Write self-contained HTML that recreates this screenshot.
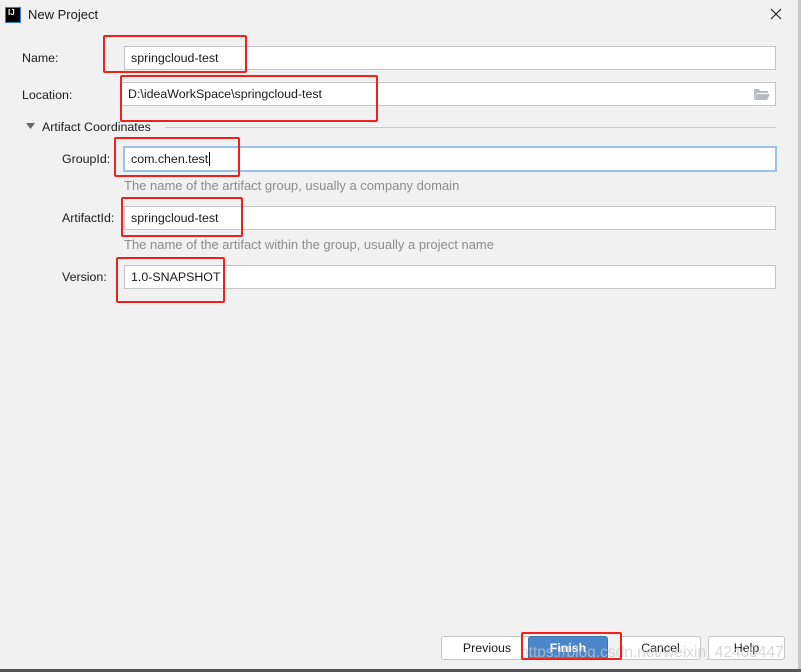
<!DOCTYPE html><html><head><style>
body{margin:0;width:801px;height:672px;background:#f1f1f1;font-family:"Liberation Sans",sans-serif;font-size:12.4px;color:#1a1a1a;position:relative;overflow:hidden}
.a{position:absolute}
.in{position:absolute;background:#fff;border:1px solid #c4c4c4;box-sizing:border-box;height:24px;line-height:22px;padding-left:6px}
.lbl{position:absolute;line-height:16px}
.hint{position:absolute;color:#8c8c8c;font-size:13px}
.red{position:absolute;border:2px solid #f0201a;border-radius:2px;box-sizing:border-box}
.btn{position:absolute;top:636px;height:24px;border:1px solid #c4c4c4;border-radius:3px;background:#fff;box-sizing:border-box;text-align:center;line-height:22px}
</style></head><body>
<div class="a" style="left:798px;top:0;width:3px;height:672px;background:#c8c8c8"></div>
<div class="a" style="left:0;top:669px;width:801px;height:3px;background:#555"></div>
<div class="a" style="left:5px;top:7px;width:16px;height:16px;background:#000;border:1px solid #3a7bd5;box-sizing:border-box;color:#fff;font-size:8px;font-weight:bold;line-height:10px;padding-left:2px">IJ</div>
<div class="lbl" style="left:28px;top:7px;font-size:13px">New Project</div>
<svg class="a" style="left:770px;top:8px" width="12" height="12"><path d="M1 1L11 11M11 1L1 11" stroke="#222" stroke-width="1.2"/></svg>
<div class="lbl" style="left:22px;top:50px">Name:</div>
<div class="in" style="left:124px;top:46px;width:652px">springcloud-test</div>
<div class="lbl" style="left:22px;top:87px">Location:</div>
<div class="in" style="left:121px;top:82px;width:655px">D:\ideaWorkSpace\springcloud-test</div>
<svg class="a" style="left:754px;top:88px" width="16" height="12"><path d="M0 1h5l1 2h8v2H3L0 11z" fill="#b8bcc0"/><path d="M3 6h13l-3 6H0z" fill="#b8bcc0"/></svg>
<svg class="a" style="left:26px;top:123px" width="9" height="7"><path d="M0 0h9L4.5 6z" fill="#666"/></svg>
<div class="lbl" style="left:42px;top:119px">Artifact Coordinates</div>
<div class="a" style="left:165px;top:127px;width:611px;height:1px;background:#c8c8c8"></div>
<div class="lbl" style="left:62px;top:151px">GroupId:</div>
<div class="in" style="left:123px;top:146px;width:654px;height:26px;border:2px solid #9cc0ec;padding-left:6px">com.chen.test<span style="border-left:1px solid #000;margin-left:1px"></span></div>
<div class="hint" style="left:124px;top:178px">The name of the artifact group, usually a company domain</div>
<div class="lbl" style="left:62px;top:210px">ArtifactId:</div>
<div class="in" style="left:124px;top:206px;width:652px">springcloud-test</div>
<div class="hint" style="left:124px;top:237px">The name of the artifact within the group, usually a project name</div>
<div class="lbl" style="left:62px;top:269px">Version:</div>
<div class="in" style="left:124px;top:265px;width:652px">1.0-SNAPSHOT</div>
<div class="btn" style="left:441px;width:92px">Previous</div>
<div class="btn" style="left:528px;width:80px;background:#4a86c8;border-color:#3a73b5;color:#fff;font-weight:bold">Finish</div>
<div class="btn" style="left:620px;width:81px">Cancel</div>
<div class="btn" style="left:708px;width:77px">Help</div>
<div class="a" style="left:520px;top:644px;color:rgba(200,200,200,0.7);font-size:15.5px">https://blog.csdn.net/weixin_42408447</div>
<div class="red" style="left:103px;top:35px;width:144px;height:38px"></div>
<div class="red" style="left:120px;top:75px;width:258px;height:47px"></div>
<div class="red" style="left:114px;top:137px;width:126px;height:40px"></div>
<div class="red" style="left:121px;top:197px;width:122px;height:40px"></div>
<div class="red" style="left:116px;top:257px;width:109px;height:46px"></div>
<div class="red" style="left:521px;top:632px;width:101px;height:28px"></div>
</body></html>
